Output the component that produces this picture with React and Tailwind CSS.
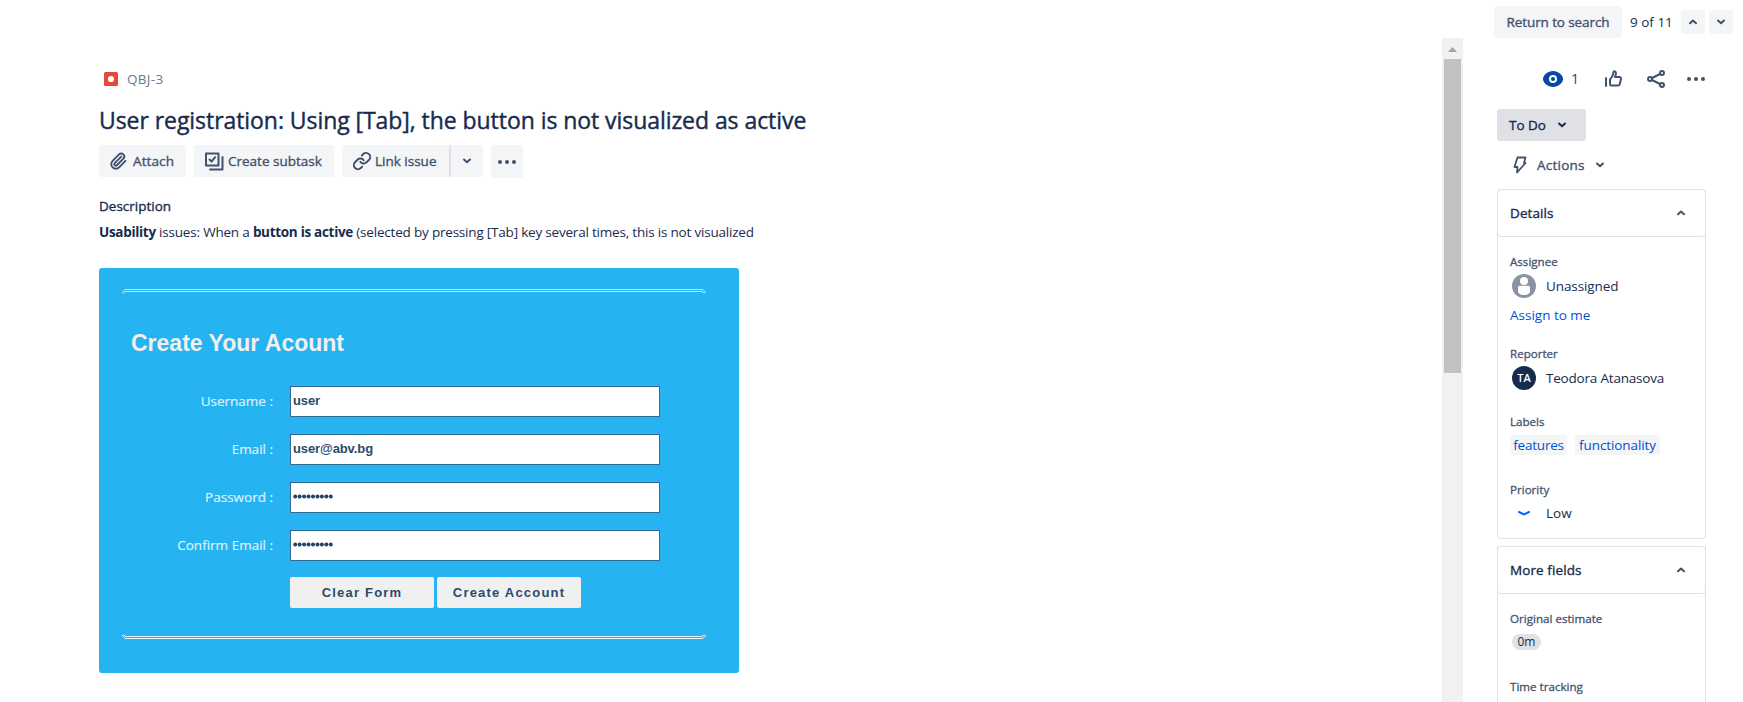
import React from "react";

const Chevron = ({ up, className = "text-[#42526e]" }) => (
  <svg width="10" height="8" viewBox="0 0 10 8" className={`shrink-0 ${className}`} fill="none" stroke="currentColor" strokeWidth="2" strokeLinecap="round" strokeLinejoin="round">
    <path d={up ? "M2 5.3 5 2.5l3 2.8" : "M2 2.5l3 2.8 3-2.8"} />
  </svg>
);

const Dots = () => (
  <svg width="18" height="4" viewBox="0 0 18 4" className="shrink-0 fill-[#42526e]">
    <circle cx="2" cy="2" r="2" />
    <circle cx="9" cy="2" r="2" />
    <circle cx="16" cy="2" r="2" />
  </svg>
);

const Svg = ({ children, className = "" }) => (
  <svg width="24" height="24" viewBox="0 0 24 24" className={`shrink-0 text-[#42526e] ${className}`} fill="none" stroke="currentColor" strokeWidth="2" strokeLinecap="round" strokeLinejoin="round">
    {children}
  </svg>
);

const Label = ({ className, children }) => (
  <div className={`h-4 text-[11.6px] leading-4 text-[#44546f] [-webkit-text-stroke:0.3px] ${className}`}>{children}</div>
);

const Rule = ({ flip }) => (
  <svg width="584" height="5" viewBox="0 0 584 5" className={`ml-[23px] block ${flip ? "-scale-y-100" : ""}`} fill="none" stroke={flip ? "#e6f3fa" : "#c0e7f9"}>
    <path d="M0 4.300 3 .5h578l3 3.800M2 4.500l1.500-2h577l1.500 2" />
  </svg>
);

const Field = ({ label, children }) => (
  <div className="flex h-12 items-start">
    <div className="w-[174px] pt-[5px] text-right text-[13.5px] leading-5 text-[#def1fb] [-webkit-text-stroke:0.2px]">{label}</div>
    <div className="ml-[17px] h-[31px] w-[370px] border border-[#336b92] bg-white pl-[2px] font-['Liberation_Sans',sans-serif] text-[13px] leading-[28px] font-bold tracking-[-0.1px] text-[#2c4a6b]">{children}</div>
  </div>
);

const Bullets = () => (
  <svg width="40" height="5" viewBox="0 0 40 5" className="mt-[11px] fill-[#1f4468]">
    {[0, 1, 2, 3, 4, 5, 6, 7, 8].map((i) => <circle key={i} cx={2.2 + i * 4.45} cy="2.500" r="2" />)}
  </svg>
);

const PanelHeader = ({ children }) => (
  <div className="-mx-px flex h-[48px] items-center justify-between rounded border border-[#dfe1e6] pr-[19px] pl-[12px] tracking-[0.100px] [-webkit-text-stroke:0.35px]">
    {children}
    <Chevron up />
  </div>
);

export default function App() {
  return (
    <div className="flex h-[702px] w-[1743px] flex-col overflow-hidden bg-white font-['Open_Sans','Noto_Sans',sans-serif] text-[13.5px] leading-5 whitespace-nowrap text-[#172b4d]">
      <header className="flex h-[38px] shrink-0 items-start justify-end pt-[6px] pr-[10px]">
        <button className="h-8 w-32 rounded-[3px] bg-[#f4f5f7] tracking-[-0.100px] text-[#42526e] [-webkit-text-stroke:0.35px]">Return to search</button>
        <div className="ml-2 flex h-8 w-[51px] items-center">9 of 11</div>
        <button className="mt-1 flex size-6 items-center justify-center rounded-[3px] bg-[#f4f5f7]"><Chevron up /></button>
        <button className="mt-1 ml-1 flex size-6 items-center justify-center rounded-[3px] bg-[#f4f5f7]"><Chevron /></button>
      </header>

      <div className="flex min-h-0 flex-1">
        <main className="w-[1442px] shrink-0 pt-[31px] pl-[99px]">
          <div className="flex h-5 items-center pl-[5px] text-[#6b778c]">
            <svg width="14" height="14" viewBox="0 0 14 14"><rect width="14" height="14" rx="1.500" fill="#e5493a" /><circle cx="7" cy="7" r="3.100" fill="#fff" /></svg>
            <span className="ml-[9px] tracking-[0.3px]">QBJ-3</span>
          </div>
          <h1 className="mt-[17px] h-7 text-[23px] leading-7 tracking-[-0.060px] [-webkit-text-stroke:0.4px]">User registration: Using [Tab], the button is not visualized as active</h1>

          <div className="mt-[11px] flex h-[33px] items-start text-[#42526e] [-webkit-text-stroke:0.35px]">
            <button className="flex h-8 w-[87px] items-center rounded-[3px] bg-[#f4f5f7] pl-[7px]">
              <Svg><g transform="translate(3 3) scale(.76)" strokeWidth="2.500"><path d="m16 6-8.414 8.586a2 2 0 0 0 2.829 2.829l8.414-8.586a4 4 0 1 0-5.657-5.657l-8.379 8.551a6 6 0 1 0 8.485 8.485l8.379-8.551" /></g></Svg>
              <span className="ml-[3px] tracking-[0.100px]">Attach</span>
            </button>
            <button className="ml-2 flex h-8 w-[140px] items-center rounded-[3px] bg-[#f4f5f7] pl-[8px]">
              <Svg><path d="M4 4.500h12.500v12H4zM7.500 10.500l2 2 3.700-4.300M20.500 8v12.500H8" /></Svg>
              <span className="ml-[2px]">Create subtask</span>
            </button>
            <button className="ml-2 flex h-8 w-[107px] items-center rounded-l-[3px] bg-[#f4f5f7] pl-[8px]">
              <Svg><g transform="translate(2.200 2.200) scale(.82)" strokeWidth="2.400"><path d="M10 13a5 5 0 0 0 7.540.540l3-3a5 5 0 0 0-7.070-7.070l-1.720 1.710" /><path d="M14 11a5 5 0 0 0-7.540-.540l-3 3a5 5 0 0 0 7.070 7.070l1.710-1.710" /></g></Svg>
              <span className="ml-[1px]">Link issue</span>
            </button>
            <button className="flex h-8 w-[34px] items-center justify-center rounded-r-[3px] border-l-2 border-[#dfe1e6] bg-[#f4f5f7]"><Chevron /></button>
            <button className="ml-2 flex h-[33px] w-8 items-center justify-center rounded-[3px] bg-[#f4f5f7]"><Dots /></button>
          </div>

          <h2 className="mt-[18px] h-5 [-webkit-text-stroke:0.35px]">Description</h2>
          <p className="mt-[6px] h-5 tracking-[-0.2px]">
            <b className="tracking-[-0.3px]">Usability</b> issues: When a <b className="tracking-[-0.3px]">button is active</b> (selected by pressing [Tab] key several times, this is not visualized
          </p>

          <section className="mt-[26px] h-[405px] w-[640px] rounded-[3px] bg-[#26b3f2] pt-[21px]">
            <Rule />
            <h3 className="mt-[33px] h-8 pl-[32px] font-['Liberation_Sans',sans-serif] text-[23px] leading-8 font-bold text-[#f0f0f0]">Create Your Acount</h3>
            <div className="mt-[27px] h-48">
              <Field label="Username :">user</Field>
              <Field label="Email :">user@abv.bg</Field>
              <Field label="Password :"><Bullets /></Field>
              <Field label="Confirm Email :"><Bullets /></Field>
            </div>
            <div className="-mt-px flex gap-[3px] pl-[191px] font-['Liberation_Sans',sans-serif] text-[13px] font-bold tracking-[1.200px] text-[#2c4a6b]">
              <button className="h-[31px] w-36 rounded-[2px] bg-[#f0f0f0]">Clear Form</button>
              <button className="h-[31px] w-36 rounded-[2px] bg-[#f0f0f0]">Create Account</button>
            </div>
            <div className="mt-[26px]"><Rule flip /></div>
          </section>
        </main>

        <div className="flex w-[21px] shrink-0 flex-col items-center bg-[#f1f1f1] pt-[9px]">
          <svg width="9" height="5" viewBox="0 0 9 5" className="shrink-0 fill-[#a3a3a3]"><path d="M4.500 0 9 5H0z" /></svg>
          <div className="mt-[7px] h-[314px] w-[17px] shrink-0 bg-[#c1c1c1]" />
        </div>

        <aside className="w-[280px] pt-[29px] pl-[34px]">
          <div className="flex h-6 items-center pl-[46px]">
            <svg width="20" height="16" viewBox="0 0 20 16" className="shrink-0"><path d="M10 0C5 0 0 4 0 8s5 8 10 8 10-4 10-8-5-8-10-8z" fill="#0747a6" /><circle cx="10" cy="8" r="4" fill="#fff" /><circle cx="10" cy="8" r="2" fill="#0747a6" /></svg>
            <span className="ml-[8px] w-[8px] text-[14px] text-[#0747a6]">1</span>
            <Svg className="ml-[22px]"><path d="M5 11v8" /><path d="M9 12.500l2.500-3.500 1-4c.2-1 2.500-1 2.500 1.300 0 1.200-.7 2.700-1 3.700h4.500c1.200 0 1.700 1 1.500 2l-1.300 5.200c-.3 1-.8 1.300-1.700 1.300h-6.500c-.9 0-1.500-.6-1.500-1.500z" /></Svg>
            <Svg className="ml-[19px]"><circle cx="6" cy="12" r="2" /><circle cx="18" cy="6" r="2" /><circle cx="18" cy="18" r="2" /><path d="M8 11l8-4M8 13l8 4" /></Svg>
            <div className="ml-[19px]"><Dots /></div>
          </div>
          <button className="mt-[18px] flex h-8 w-[89px] items-center rounded-[3px] bg-[#dfe1e6] pl-[12px] [-webkit-text-stroke:0.35px]">
            To Do<span className="ml-[11px]"><Chevron className="text-[#172b4d]" /></span>
          </button>
          <button className="mt-[8px] flex h-8 items-center pl-[11px] text-[#42526e] [-webkit-text-stroke:0.35px]">
            <Svg><path d="M9.500 4.500h8l-1.500 5.500h1.500L9 19.500l.5-5.500H6.500z" strokeWidth="1.800" /></Svg>
            <span className="ml-[5px] tracking-[0.250px]">Actions</span><span className="ml-[10px]"><Chevron /></span>
          </button>

          <section className="mt-[8px] h-[350px] w-[209px] rounded border border-t-0 border-[#dfe1e6]">
            <PanelHeader>Details</PanelHeader>
            <div className="pl-[12px]">
              <Label className="mt-[17px]">Assignee</Label>
              <div className="mt-[4px] flex h-6 items-center">
                <svg width="24" height="24" viewBox="0 0 24 24" className="ml-[2px]"><circle cx="12" cy="12" r="12" fill="#8993a4" /><circle cx="12" cy="7" r="4" fill="#fff" /><path d="M6 13.500a1.800 1.800 0 0 1 1.800-1.800h8.400a1.800 1.800 0 0 1 1.800 1.800V17c0 2.500-2.700 4-6 4s-6-1.500-6-4z" fill="#fff" /></svg>
                <span className="ml-[10px] tracking-[-0.100px]">Unassigned</span>
              </div>
              <div className="mt-[7px] h-5 text-[#0052cc]">Assign to me</div>
              <Label className="mt-[21px]">Reporter</Label>
              <div className="mt-[4px] flex h-6 items-center">
                <div className="ml-[2px] size-6 rounded-full bg-[#172b4d] text-center text-[11px] leading-6 font-semibold text-white">TA</div>
                <span className="ml-[10px] tracking-[-0.2px]">Teodora Atanasova</span>
              </div>
              <Label className="mt-[24px]">Labels</Label>
              <div className="mt-[5px] flex h-5 gap-2 text-[#0052cc]">
                <div className="w-[57px] rounded-[3px] bg-[#f4f5f7] text-center tracking-[-0.2px]">features</div>
                <div className="w-[85px] rounded-[3px] bg-[#f4f5f7] text-center tracking-[-0.100px]">functionality</div>
              </div>
              <Label className="mt-[27px]">Priority</Label>
              <div className="mt-[5px] flex h-5 items-center">
                <svg width="12" height="5" viewBox="0 0 12 5" className="ml-[8px]" fill="none" stroke="#0065ff" strokeWidth="2" strokeLinecap="round"><path d="M1 1l5 2.500L11 1" /></svg>
                <span className="ml-[16px]">Low</span>
              </div>
            </div>
          </section>

          <section className="mt-[7px] h-[200px] w-[209px] border-x border-[#dfe1e6]">
            <PanelHeader>More fields</PanelHeader>
            <div className="pl-[12px]">
              <Label className="mt-[17px]">Original estimate</Label>
              <div className="mt-[7px] ml-[2px] h-4 w-[29px] rounded-full bg-[#dfe1e6] text-center text-[12px] leading-4">0m</div>
              <Label className="mt-[29px]">Time tracking</Label>
            </div>
          </section>
        </aside>
      </div>
    </div>
  );
}
